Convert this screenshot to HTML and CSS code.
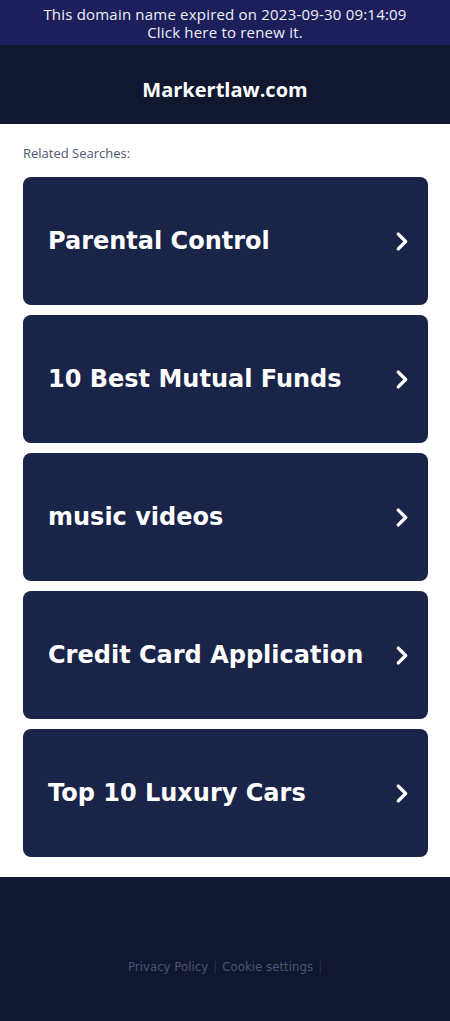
FILE: index.html
```html
<!DOCTYPE html>
<html>
<head>
<meta charset="utf-8">
<link rel="stylesheet" href="styles.css">
</head>
<body>
<div class="banner">This domain name expired on 2023-09-30 09:14:09<br>Click here to renew it.</div>
<header class="header">Markertlaw.com</header>
<main class="main">
  <div class="label">Related Searches:</div>
  <div class="list">
    <a class="card"><span>Parental Control</span><svg class="chev" viewBox="0 0 14 20" width="15" height="21"><path d="M3 3 L10 10 L3 17" fill="none" stroke="#fff" stroke-width="3.2" stroke-linecap="round" stroke-linejoin="round"/></svg></a>
    <a class="card"><span>10 Best Mutual Funds</span><svg class="chev" viewBox="0 0 14 20" width="15" height="21"><path d="M3 3 L10 10 L3 17" fill="none" stroke="#fff" stroke-width="3.2" stroke-linecap="round" stroke-linejoin="round"/></svg></a>
    <a class="card"><span>music videos</span><svg class="chev" viewBox="0 0 14 20" width="15" height="21"><path d="M3 3 L10 10 L3 17" fill="none" stroke="#fff" stroke-width="3.2" stroke-linecap="round" stroke-linejoin="round"/></svg></a>
    <a class="card"><span>Credit Card Application</span><svg class="chev" viewBox="0 0 14 20" width="15" height="21"><path d="M3 3 L10 10 L3 17" fill="none" stroke="#fff" stroke-width="3.2" stroke-linecap="round" stroke-linejoin="round"/></svg></a>
    <a class="card"><span>Top 10 Luxury Cars</span><svg class="chev" viewBox="0 0 14 20" width="15" height="21"><path d="M3 3 L10 10 L3 17" fill="none" stroke="#fff" stroke-width="3.2" stroke-linecap="round" stroke-linejoin="round"/></svg></a>
  </div>
</main>
<footer class="footer">
  <a>Privacy Policy</a><span class="sep">|</span><a>Cookie settings</a><span class="sep">|</span>
</footer>
</body>
</html>
```
FILE: styles.css
```css
html, body { margin: 0; padding: 0; }
body { background: #10172e; font-family: "DejaVu Sans", sans-serif; }
.banner {
  background: #1c1f5c;
  color: #f0f0f5;
  font-family: "Open Sans", sans-serif;
  font-size: 15px;
  letter-spacing: 0.2px;
  line-height: 18px;
  text-align: center;
  padding: 5px 0 4px;
  height: 36px;
}
.header {
  background: #10172e;
  color: #fff;
  font-family: "Open Sans", sans-serif;
  font-weight: 700;
  font-size: 20px;
  height: 79px;
  box-sizing: border-box;
  padding-top: 10px;
  display: flex;
  align-items: center;
  justify-content: center;
}
.main {
  background: #fff;
  padding: 20px 22px 20px 23px;
}
.label {
  font-family: "Open Sans", sans-serif;
  font-size: 13px;
  color: #4d5673;
  line-height: 16px;
  padding-top: 1px;
  margin-bottom: 16px;
}
.list { display: flex; flex-direction: column; gap: 10px; }
.card {
  display: flex;
  align-items: center;
  justify-content: space-between;
  height: 128px;
  background: #1a2449;
  border-radius: 8px;
  padding: 0 18px 0 25px;
  color: #fff;
  font-family: "DejaVu Sans", sans-serif;
  font-weight: 700;
  font-size: 24px;
}
.chev { display: block; }
.footer {
  height: 144px;
  display: flex;
  align-items: center;
  justify-content: center;
  font-size: 11.8px;
  color: #4b5478;
  padding-top: 36px;
  box-sizing: border-box;
}
.footer a { color: #4b5478; }
.sep { color: #2b3350; margin: 0 5px; }
.sep:last-child { margin-right: 0; }
```
